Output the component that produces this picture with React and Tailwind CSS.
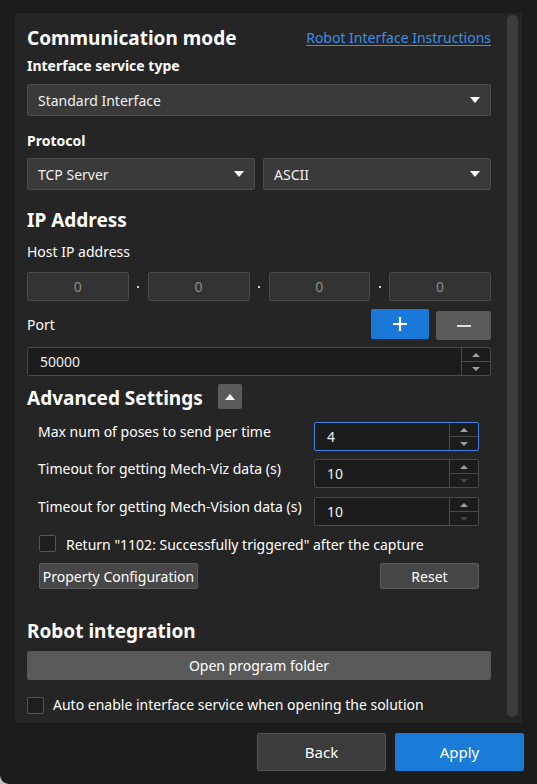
import React from 'react';

const font = { fontFamily: '"Noto Sans", "Open Sans", sans-serif' };

// small triangle glyph used in selects, spin boxes and the toggle
const Tri = ({ up, w = 10, h = 6, color = '#ffffff' }) => (
  <svg width={w} height={h} viewBox={`0 0 ${w} ${h}`}>
    {up ? (
      <polygon points={`0,${h} ${w},${h} ${w / 2},0`} fill={color} />
    ) : (
      <polygon points={`0,0 ${w},0 ${w / 2},${h}`} fill={color} />
    )}
  </svg>
);

const Select = ({ value, className = '' }) => (
  <div
    className={`h-[32px] flex items-center justify-between pl-[10px] pr-[10px] bg-[#3a3a3a] border border-[#4c4c4c] rounded-[2px] text-[14px] text-[#f0f0f0] ${className}`}
  >
    <span>{value}</span>
    <Tri w={10} h={6} />
  </div>
);

const IpField = () => (
  <div className="flex-1 h-[29px] flex items-center justify-center bg-[#333333] border border-[#4a4a4a] rounded-[2px] text-[14px] text-[#8c8c8c]">
    0
  </div>
);

const IpDot = () => (
  <div className="w-[19px] flex items-center justify-center">
    <div className="w-[2px] h-[2px] bg-[#d0d0d0]" />
  </div>
);

const SpinBox = ({ value, focused, downDim, className = '' }) => (
  <div
    className={`h-[29px] flex bg-[#1c1c1c] border rounded-[2px] ${focused ? 'border-[#3f82e4]' : 'border-[#4a4a4a]'} ${className}`}
  >
    <div className="flex-1 flex items-center pl-[12px] text-[14px] text-[#f0f0f0]">{value}</div>
    <div className="w-[29px] flex flex-col border-l border-[#4a4a4a]">
      <div className="flex-1 flex items-center justify-center border-b border-[#4a4a4a]">
        <Tri up w={8} h={4} color="#a0a0a0" />
      </div>
      <div className="flex-1 flex items-center justify-center">
        <Tri w={8} h={4} color={downDim ? '#474747' : '#a0a0a0'} />
      </div>
    </div>
  </div>
);

const Check = () => (
  <div className="w-[17px] h-[17px] shrink-0 bg-[#1e1e1e] border border-[#555555] rounded-[2px]" />
);

const Heading = ({ children }) => (
  <div className="text-[19px] leading-[28px] font-bold text-white">{children}</div>
);

const Label = ({ children, bold }) => (
  <div className={`text-[14px] leading-[20px] text-white ${bold ? 'font-bold' : ''}`}>{children}</div>
);

const SettingRow = ({ label, value, focused, downDim, className = '' }) => (
  <div className={`flex items-start justify-between ${className}`}>
    <Label>{label}</Label>
    <SpinBox value={value} focused={focused} downDim={downDim} className="w-[165px]" />
  </div>
);

export default function App() {
  return (
    <div className="w-[537px] h-[784px] bg-[#bdbdbd]" style={font}>
      <div className="w-[537px] h-[784px] bg-[#1c1c1c] rounded-bl-[9px] pt-[13px] pl-[15px] flex flex-col">
        {/* Panel */}
        <div className="w-[507px] h-[710px] bg-[#252525] flex">
          <div className="w-[464px] ml-[12px] pt-[11px]">
            <div className="flex items-start justify-between">
              <Heading>Communication mode</Heading>
              <a className="text-[14px] leading-[28px] text-[#3b8fe8] underline underline-offset-2">
                Robot Interface Instructions
              </a>
            </div>

            <div className="mt-[4px]">
              <Label bold>Interface service type</Label>
            </div>
            <Select value="Standard Interface" className="mt-[8px]" />

            <div className="mt-[15px]">
              <Label bold>Protocol</Label>
            </div>
            <div className="mt-[7px] flex gap-[8px]">
              <Select value="TCP Server" className="flex-1" />
              <Select value="ASCII" className="flex-1" />
            </div>

            <div className="mt-[16px]">
              <Heading>IP Address</Heading>
            </div>
            <div className="mt-[8px]">
              <Label>Host IP address</Label>
            </div>
            <div className="mt-[10px] flex">
              <IpField />
              <IpDot />
              <IpField />
              <IpDot />
              <IpField />
              <IpDot />
              <IpField />
            </div>

            <div className="mt-[8px] h-[31px] flex items-center">
              <div className="flex-1">
                <Label>Port</Label>
              </div>
              <div className="flex items-start h-[31px]">
                <div className="w-[58px] h-[30px] bg-[#1a78d8] rounded-[2px] flex items-center justify-center">
                  <svg width="16" height="16" viewBox="0 0 16 16">
                    <path d="M8 1v14M1 8h14" stroke="#ffffff" strokeWidth="2.2" />
                  </svg>
                </div>
                <div className="ml-[7px] mt-[2px] w-[55px] h-[29px] bg-[#5a5a5a] rounded-[2px] flex items-center justify-center">
                  <svg width="14" height="4" viewBox="0 0 14 4">
                    <path d="M0 2h14" stroke="#ffffff" strokeWidth="1.6" />
                  </svg>
                </div>
              </div>
            </div>
            <SpinBox value="50000" className="mt-[7px]" />

            <div className="mt-[8px] flex items-start">
              <Heading>Advanced Settings</Heading>
              <div className="ml-[15px] w-[24px] h-[25px] bg-[#5a5a5a] rounded-[2px] flex items-center justify-center">
                <Tri up w={10} h={6} />
              </div>
            </div>

            <div className="pl-[11px] pr-[12px]">
              <SettingRow label="Max num of poses to send per time" value="4" focused className="mt-[10px]" />
              <SettingRow label="Timeout for getting Mech-Viz data (s)" value="10" downDim className="mt-[8px]" />
              <SettingRow label="Timeout for getting Mech-Vision data (s)" value="10" downDim className="mt-[9px]" />

              <div className="mt-[9px] flex items-start gap-[10px] pl-[1px]">
                <Check />
                <Label>Return "1102: Successfully triggered" after the capture</Label>
              </div>

              <div className="mt-[8px] flex justify-between pl-[1px]">
                <div className="w-[159px] h-[26px] bg-[#474747] border border-[#5c5c5c] rounded-[2px] flex items-center justify-center text-[14px] text-white">
                  Property Configuration
                </div>
                <div className="w-[99px] h-[26px] bg-[#474747] border border-[#5c5c5c] rounded-[2px] flex items-center justify-center text-[14px] text-white">
                  Reset
                </div>
              </div>
            </div>

            <div className="mt-[28px]">
              <Heading>Robot integration</Heading>
            </div>
            <div className="mt-[6px] h-[29px] bg-[#595959] rounded-[2px] flex items-center justify-center text-[14px] text-white">
              Open program folder
            </div>

            <div className="mt-[15px] flex items-center gap-[9px]">
              <Check />
              <Label>Auto enable interface service when opening the solution</Label>
            </div>
          </div>

          {/* Scrollbar */}
          <div className="ml-[16px] mt-[2px] w-[11px] h-[702px] bg-[#3c3c3c] rounded-[5px]" />
        </div>

        {/* Footer */}
        <div className="mt-[10px] pr-[13px] flex justify-end gap-[9px]">
          <div className="w-[129px] h-[38px] bg-[#3c3c3c] border border-[#555555] rounded-[2px] flex items-center justify-center text-[15px] text-white">
            Back
          </div>
          <div className="w-[129px] h-[38px] bg-[#1a7bd9] rounded-[2px] flex items-center justify-center text-[15px] text-white">
            Apply
          </div>
        </div>
      </div>
    </div>
  );
}
